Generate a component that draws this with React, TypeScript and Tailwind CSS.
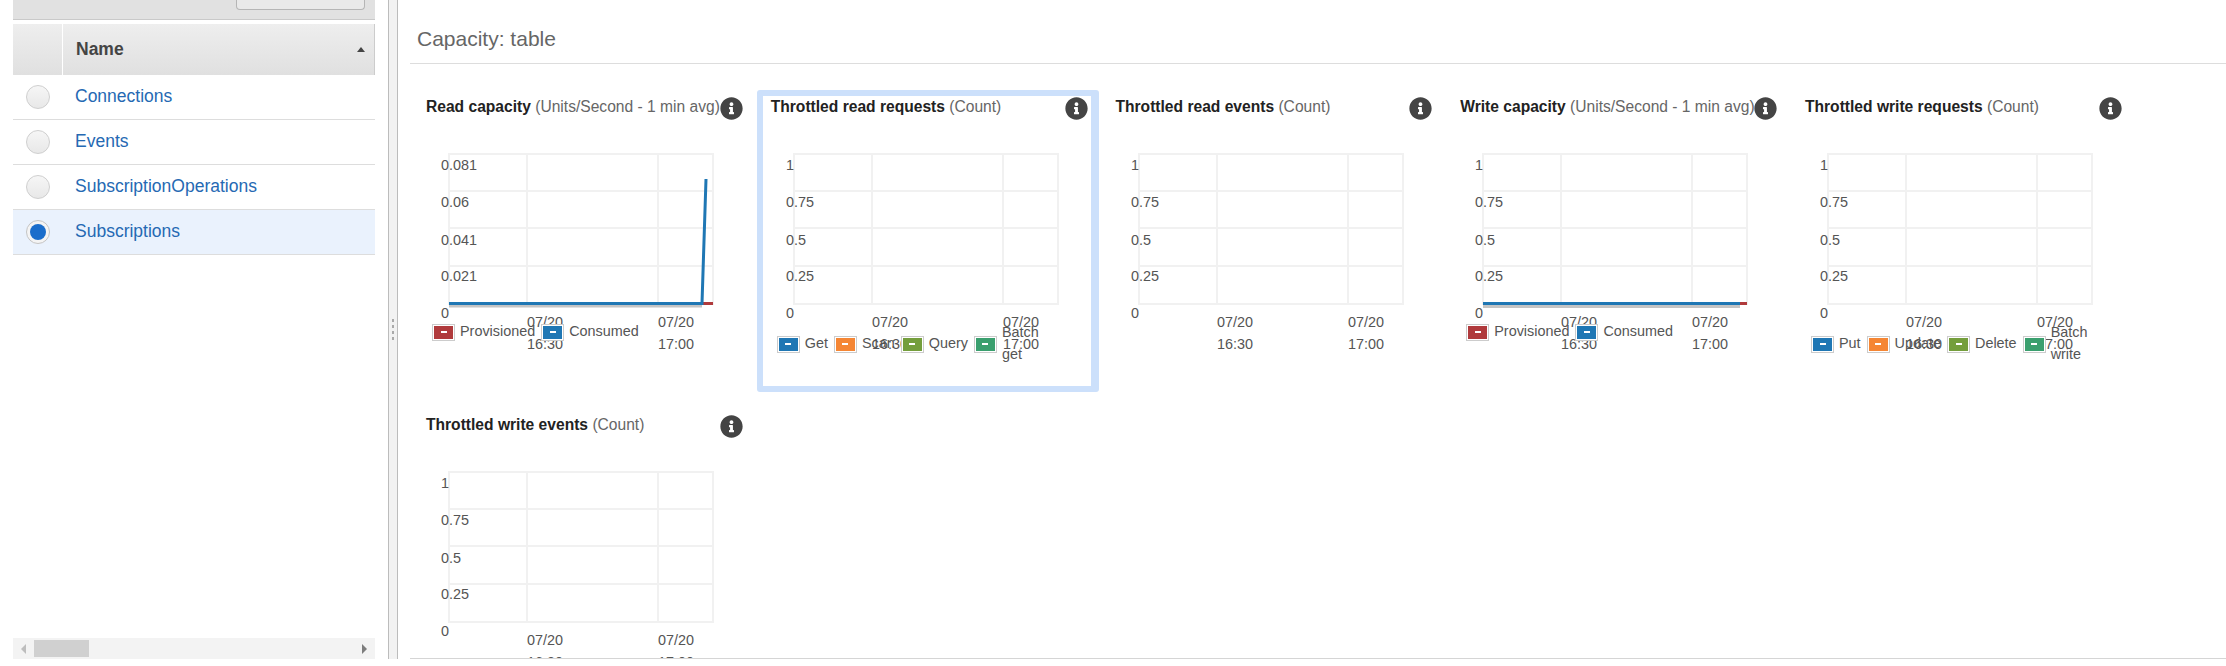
import { FaInfoCircle } from 'react-icons/fa';

type LegendItem = { label: string; color: string };
type Series = { points: string; color: string };

type ChartProps = {
  title: string;
  unit: string;
  yLabels: string[];
  legend?: LegendItem[];
  lowLegend?: boolean;
  series?: Series[];
  shadow?: string;
  selected?: boolean;
};

const tables = ['Connections', 'Events', 'SubscriptionOperations', 'Subscriptions'];

const counts = ['1', '0.75', '0.5', '0.25', '0'];

const charts: ChartProps[] = [
  {
    title: 'Read capacity',
    unit: '(Units/Second - 1 min avg)',
    yLabels: ['0.081', '0.06', '0.041', '0.021', '0'],
    legend: [
      { label: 'Provisioned', color: 'bg-[#b03a3c]' },
      { label: 'Consumed', color: 'bg-[#1f77b4]' },
    ],
    series: [
      { points: '284,173.5 295,173.5', color: '#b03a3c' },
      { points: '31,173.5 284,173.5 288,49', color: '#1f77b4' },
    ],
    shadow: 'M31 174h253v3.5H31z',
  },
  {
    title: 'Throttled read requests',
    unit: '(Count)',
    yLabels: counts,
    selected: true,
    lowLegend: true,
    legend: [
      { label: 'Get', color: 'bg-[#1f77b4]' },
      { label: 'Scan', color: 'bg-[#f58634]' },
      { label: 'Query', color: 'bg-[#749e3c]' },
      { label: 'Batch get', color: 'bg-[#3a9f6e]' },
    ],
  },
  { title: 'Throttled read events', unit: '(Count)', yLabels: counts },
  {
    title: 'Write capacity',
    unit: '(Units/Second - 1 min avg)',
    yLabels: counts,
    legend: [
      { label: 'Provisioned', color: 'bg-[#b03a3c]' },
      { label: 'Consumed', color: 'bg-[#1f77b4]' },
    ],
    series: [
      { points: '288,173.5 295,173.5', color: '#b03a3c' },
      { points: '31,173.5 288,173.5', color: '#1f77b4' },
    ],
    shadow: 'M31 174h257v4H31z',
  },
  {
    title: 'Throttled write requests',
    unit: '(Count)',
    yLabels: counts,
    lowLegend: true,
    legend: [
      { label: 'Put', color: 'bg-[#1f77b4]' },
      { label: 'Update', color: 'bg-[#f58634]' },
      { label: 'Delete', color: 'bg-[#749e3c]' },
      { label: 'Batch write', color: 'bg-[#3a9f6e]' },
    ],
  },
  { title: 'Throttled write events', unit: '(Count)', yLabels: counts },
];

const yBaselines = [40, 77, 115, 151, 188];

function Chart({ title, unit, yLabels, legend, lowLegend, series, shadow, selected }: ChartProps) {
  return (
    <div
      className={`relative mb-[16px] h-[302px] shrink-0 rounded-[3px] border-[6px] ${
        selected
          ? 'mr-[2.5px] w-[342.25px] border-r-[8px] border-[#cce0fb]'
          : 'w-[344.75px] border-transparent'
      }`}
    >
      <div
        className={`flex h-[34px] items-start justify-between pl-[8px] pt-[1px] ${
          selected ? 'pr-[3.5px]' : 'pr-[8px]'
        }`}
      >
        <div className="whitespace-nowrap text-[15.6px] leading-[20px]">
          <span className="font-bold text-[#222]">{title}</span>{' '}
          <span className="text-[#666]">{unit}</span>
        </div>
        <FaInfoCircle className="-ml-[5px] shrink-0 text-[23px] text-[#444]" />
      </div>
      <svg width="332" height="240" className="text-[14.4px]">
        <g fill="none" stroke="#f1f1f1" strokeWidth="2">
          <rect x="31" y="24" width="264" height="150" />
          <path d="M31 61h264M31 98h264M31 136h264M109 24v150M240 24v150" />
        </g>
        {shadow && <path d={shadow} fill="#c4c4c4" />}
        {series?.map((s) => (
          <polyline key={s.color} points={s.points} fill="none" stroke={s.color} strokeWidth="3" />
        ))}
        <g fill="#555">
          {yLabels.map((label, i) => (
            <text key={label} x="23" y={yBaselines[i]}>
              {label}
            </text>
          ))}
          <text x="109" y="197">07/20</text>
          <text x="109" y="219">16:30</text>
          <text x="240" y="197">07/20</text>
          <text x="240" y="219">17:00</text>
        </g>
      </svg>
      {legend && (
        <div
          className={`absolute left-[14px] flex h-[22px] items-center gap-[6px] text-[14.4px] leading-[22px] text-[#555] ${
            lowLegend ? 'top-[237px]' : 'top-[225px]'
          }`}
        >
          {legend.map((item) => (
            <div key={item.label} className="flex items-center gap-[5px]">
              <span className="flex h-[17px] w-[23px] items-center justify-center border border-[#ccc] bg-white p-[1px]">
                <span className={`flex h-full w-full items-center justify-center ${item.color}`}>
                  <span className="h-[1.5px] w-[6px] bg-white" />
                </span>
              </span>
              <span className="w-min pb-[2px]">{item.label}</span>
            </div>
          ))}
        </div>
      )}
    </div>
  );
}

export default function App() {
  return (
    <div className="flex h-[666px] w-[2226px] overflow-hidden bg-white font-['Liberation_Sans',Arial,sans-serif]">
      <aside className="ml-[13px] flex h-[659px] w-[362px] shrink-0 flex-col">
        <div className="flex h-[20px] justify-end border-b border-[#c9c9c9] bg-[#e1e1e1] pr-[10px]">
          <div className="h-[10px] w-[129px] rounded-b-[4px] border border-t-0 border-[#b5b5b5] bg-[#e9e9e9]" />
        </div>
        <div className="mt-[4px] flex h-[51px] border-r border-[#ccc] bg-gradient-to-b from-[#eeeeee] to-[#e0e0e0]">
          <div className="w-[50px] border-r border-white" />
          <div className="flex flex-1 items-center justify-between pl-[13px] pr-[9px] text-[17.5px] font-bold text-[#444]">
            Name
            <span className="h-0 w-0 border-x-[4.5px] border-b-[5px] border-x-transparent border-b-[#444]" />
          </div>
        </div>
        {tables.map((name) => {
          const active = name === 'Subscriptions';
          return (
            <div
              key={name}
              className={`flex h-[45px] items-center border-b border-[#dddddd] pb-[1px] ${active ? 'bg-[#eaf2fd]' : ''}`}
            >
              <div className="flex w-[50px] justify-center">
                {active ? (
                  <span className="flex h-[24px] w-[24px] items-center justify-center rounded-full border border-[#c4c4c4] bg-[#f4f4f4]">
                    <span className="h-[16px] w-[16px] rounded-full bg-[#1a6dcb]" />
                  </span>
                ) : (
                  <span className="h-[24px] w-[24px] rounded-full border border-[#cfcfcf] bg-gradient-to-b from-[#f6f6f6] to-[#e8e8e8]" />
                )}
              </div>
              <span className="pb-[1px] pl-[12px] text-[17.5px] text-[#2569b3]">{name}</span>
            </div>
          );
        })}
        <div className="mt-auto flex h-[21px] items-center bg-[#f3f3f3]">
          <svg width="21" height="21" viewBox="0 0 21 21">
            <path d="M8 11l5-5v10z" fill="#bdbdbd" />
          </svg>
          <div className="h-[17px] w-[55px] bg-[#d0d0d0]" />
          <svg width="21" height="21" viewBox="0 0 21 21" className="ml-auto">
            <path d="M8 6l5 5-5 5z" fill="#7d7d7d" />
          </svg>
        </div>
      </aside>

      <div className="ml-[13px] flex h-[659px] w-[10px] shrink-0 flex-col items-center justify-center gap-[3px] border-x border-[#bcbcbc] bg-[#f2f2f2]">
        <span className="h-[3px] w-[2px] bg-[#aaaaaa]" />
        <span className="h-[3px] w-[2px] bg-[#aaaaaa]" />
        <span className="h-[3px] w-[2px] bg-[#aaaaaa]" />
        <span className="h-[3px] w-[2px] bg-[#aaaaaa]" />
      </div>

      <main className="ml-[12px] h-[659px] flex-1 overflow-hidden border-b border-[#d5d5d5]">
        <h2 className="flex h-[64px] items-center border-b border-[#dddddd] pl-[7px] pt-[14px] text-[21px] font-normal text-[#666]">
          Capacity: table
        </h2>
        <div className="-mr-[20px] flex flex-wrap pl-[2px] pt-[26px]">
          {charts.map((chart) => (
            <Chart key={chart.title} {...chart} />
          ))}
        </div>
      </main>
    </div>
  );
}
